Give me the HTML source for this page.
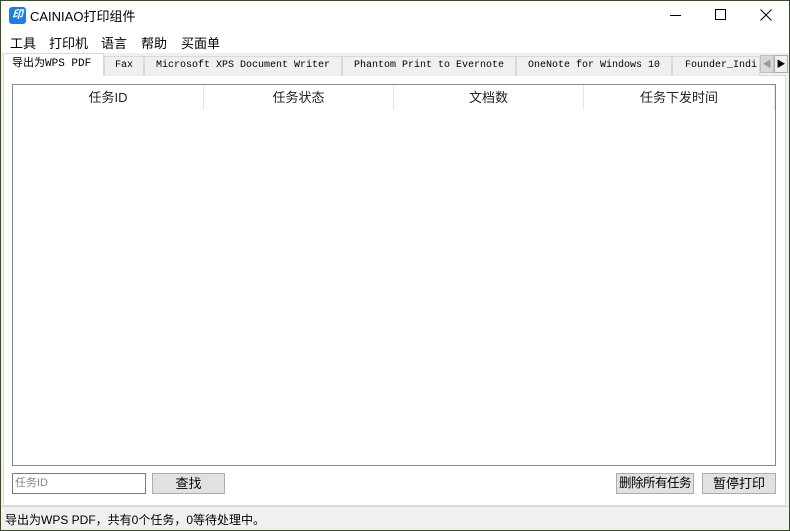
<!DOCTYPE html>
<html><head><meta charset="utf-8"><style>
*{margin:0;padding:0;box-sizing:border-box}
body{width:790px;height:531px;overflow:hidden;background:#fff;font-family:"Liberation Sans","Noto Sans CJK SC",sans-serif;font-size:12px;color:#000;position:relative}
.a{position:absolute;white-space:nowrap}
.win{left:0;top:0;width:790px;height:531px;border:1px solid #3a4a2a}
.tab{position:absolute;top:56px;height:20px;background:#f0f0f0;border:1px solid #d9d9d9;border-bottom:none;font-family:"Liberation Mono","Noto Sans CJK SC",monospace;font-size:10px;line-height:18px;text-align:center;white-space:nowrap;overflow:hidden}
.btn{position:absolute;background:#e1e1e1;border:1px solid #adadad;text-align:center;line-height:19px;font-size:13px;white-space:nowrap;overflow:hidden}
.hd{position:absolute;top:85px;height:25px;line-height:25px;text-align:center;font-size:13px;color:#222;border-right:1px solid #e5e5e5}
.m{position:absolute;top:33px;font-size:13px}
</style></head><body>
<div class="a win"></div>
<div class="a" style="left:9px;top:7px;width:17px;height:17px;background:#1a7ee8;border-radius:3px;color:#fff;font-size:11px;font-weight:bold;font-style:italic;text-align:center;line-height:17px">印</div>
<div class="a" style="left:30px;top:6px;font-size:13px">CAINIAO打印组件</div>
<div class="a" style="left:670px;top:15px;width:11px;height:1px;background:#000"></div>
<div class="a" style="left:715px;top:9px;width:11px;height:11px;border:1px solid #000"></div>
<svg class="a" style="left:760px;top:9px" width="12" height="12"><path d="M0.5 0.5L11.5 11.5M11.5 0.5L0.5 11.5" stroke="#000" stroke-width="1"/></svg>
<div class="m" style="left:10px">工具</div>
<div class="m" style="left:49px">打印机</div>
<div class="m" style="left:101px">语言</div>
<div class="m" style="left:141px">帮助</div>
<div class="m" style="left:181px">买面单</div>
<div class="a" style="left:1px;top:53px;width:788px;height:477px;background:#f0f0f0"></div>
<div class="a" style="left:3px;top:75px;width:783px;height:431px;background:#fff;border:1px solid #d9d9d9"></div>
<div class="tab" style="left:104px;width:40px">Fax</div>
<div class="tab" style="left:144px;width:198px">Microsoft XPS Document Writer</div>
<div class="tab" style="left:342px;width:174px">Phantom Print to Evernote</div>
<div class="tab" style="left:516px;width:156px">OneNote for Windows 10</div>
<div class="tab" style="left:672px;width:88px;text-align:left;padding-left:12px">Founder_Indi</div>
<div class="a" style="left:3px;top:53px;width:101px;height:23px;background:#fff;border:1px solid #d9d9d9;border-bottom:none;font-family:'Liberation Mono','Noto Sans CJK SC',monospace;font-size:11px;line-height:20px;padding-left:8px">导出为WPS PDF</div>
<div class="a" style="left:760px;top:55px;width:14px;height:18px;background:#d9d9d9;border:1px solid #c0c0c0;color:#999;font-size:9px;line-height:16px;text-align:center">◀</div>
<div class="a" style="left:774px;top:55px;width:14px;height:18px;background:#f0f0f0;border:1px solid #adadad;font-size:9px;line-height:16px;text-align:center">▶</div>
<div class="a" style="left:12px;top:84px;width:764px;height:382px;background:#fff;border:1px solid #828790"></div>
<div class="hd" style="left:13px;width:191px">任务ID</div>
<div class="hd" style="left:204px;width:190px">任务状态</div>
<div class="hd" style="left:394px;width:190px">文档数</div>
<div class="hd" style="left:584px;width:191px">任务下发时间</div>
<div class="a" style="left:12px;top:473px;width:134px;height:21px;border:1px solid #7a7a7a;background:#fff;color:#888;font-size:11px;line-height:19px;padding-left:2px">任务ID</div>
<div class="btn" style="left:152px;top:473px;width:73px;height:21px">查找</div>
<div class="btn" style="left:616px;top:473px;width:78px;height:21px;font-size:12.5px;letter-spacing:-0.5px">删除所有任务</div>
<div class="btn" style="left:702px;top:473px;width:74px;height:21px">暂停打印</div>
<div class="a" style="left:1px;top:506px;width:788px;height:1px;background:#d7d7d7"></div>
<div class="a" style="left:5px;top:511px;font-size:12px">导出为WPS PDF，共有0个任务，0等待处理中。</div>
</body></html>
